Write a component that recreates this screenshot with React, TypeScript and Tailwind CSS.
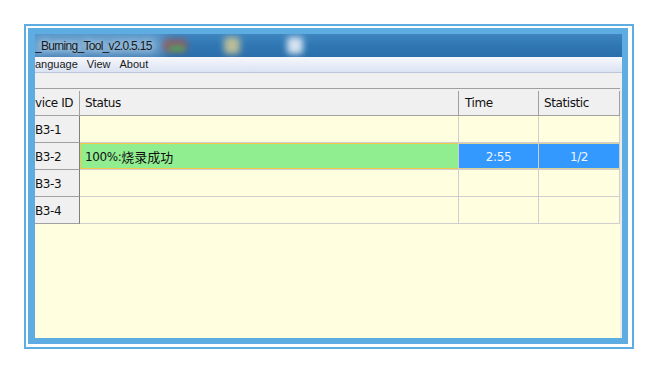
const sans = "font-['Liberation_Sans',Arial,'Noto_Sans_CJK_SC',sans-serif]";
const tahoma = "font-['DejaVu_Sans','Noto_Sans_CJK_SC',sans-serif]";

type Row = { id: string; status: string; time: string; stat: string; active?: boolean };

const rows: Row[] = [
  { id: "B3-1", status: "", time: "", stat: "" },
  { id: "B3-2", status: "100%:", time: "2:55", stat: "1/2", active: true },
  { id: "B3-3", status: "", time: "", stat: "" },
  { id: "B3-4", status: "", time: "", stat: "" },
];

function TitleBar() {
  return (
    <div className="relative h-[23px] shrink-0 overflow-hidden bg-gradient-to-b from-[#3f86c0] via-[#2f77b3] to-[#2a6fab]">
      <div className="absolute left-[-10px] top-[1px] h-[22px] w-[140px] rounded-full bg-[#a9cbe6] opacity-60 blur-[7px]" />
      <div className="absolute left-[128px] top-[5px] h-[13px] w-[24px] rounded-sm bg-[#a05a55] opacity-80 blur-[3px]" />
      <div className="absolute left-[134px] top-[11px] h-[7px] w-[16px] rounded-sm bg-[#4fa060] opacity-80 blur-[2px]" />
      <div className="absolute left-[189px] top-[3px] h-[17px] w-[16px] rounded-sm bg-[#c9c497] opacity-90 blur-[3px]" />
      <div className="absolute left-[252px] top-[3px] h-[17px] w-[16px] rounded-sm bg-[#e6eef8] opacity-90 blur-[3px]" />
      <div
        className={`relative pt-[5px] text-[12px] leading-[14px] tracking-[-0.7px] text-[#1a1a1a] [text-shadow:0_0_6px_#e6f0fa] ${sans}`}
      >
        _Burning_Tool_v2.0.5.15
      </div>
    </div>
  );
}

function MenuBar() {
  return (
    <div
      className={`flex h-[16px] shrink-0 items-center gap-[9px] border-b border-[#bcc5d9] bg-gradient-to-b from-[#f6f8fc] to-[#dbe2f2] text-[11px] text-[#1a1a1a] ${sans}`}
    >
      <span>anguage</span>
      <span>View</span>
      <span>About</span>
    </div>
  );
}

function Grid() {
  return (
    <div className={`flex w-[585px] flex-col bg-[#ffffe0] text-[12px] tracking-[-0.4px] text-[#111] ${tahoma}`}>
      <div className="flex h-[28px] border-y border-[#a0a0a0] bg-[#f0f0f0] pt-[2px]">
        <div className="flex w-[45px] items-center border-r border-[#a0a0a0]">vice ID</div>
        <div className="flex w-[379px] items-center border-r border-[#a0a0a0] pl-[5px]">Status</div>
        <div className="flex w-[80px] items-center border-r border-[#a0a0a0] pl-[6px]">Time</div>
        <div className="flex w-[81px] items-center border-r border-[#a0a0a0] pl-[5px]">Statistic</div>
      </div>
      {rows.map((r) => (
        <div key={r.id} className="flex h-[27px]">
          <div className="flex w-[45px] items-center border-r border-b border-r-[#808080] border-b-[#a0a0a0] bg-[#f0f0f0] pt-[1px]">
            {r.id}
          </div>
          <div
            className={`flex w-[379px] items-center border-r border-b border-[#cfcfcf] pl-[5px] pt-[1px] ${
              r.active ? "bg-[#90ee90] shadow-[inset_1px_1px_0_#efc94a,inset_0_-1px_0_#efc94a]" : ""
            }`}
          >
            {r.status}
            {r.active && (
              <span className="text-[13px] tracking-normal font-['Noto_Sans_CJK_SC',sans-serif]">烧录成功</span>
            )}
          </div>
          <div
            className={`flex w-[80px] items-center justify-center border-r border-b border-[#cfcfcf] pt-[1px] ${
              r.active ? "bg-[#3399ff] text-[#eef5ff] shadow-[inset_0_1px_0_#d9cf9a,inset_0_-1px_0_#d9cf9a]" : ""
            }`}
          >
            {r.time}
          </div>
          <div
            className={`flex w-[81px] items-center justify-center border-r border-b border-[#cfcfcf] pt-[1px] ${
              r.active ? "bg-[#3399ff] text-[#eef5ff] shadow-[inset_0_1px_0_#d9cf9a,inset_0_-1px_0_#d9cf9a]" : ""
            }`}
          >
            {r.stat}
          </div>
        </div>
      ))}
      <div className="flex-1" />
    </div>
  );
}

export default function App() {
  return (
    <div className="h-[374px] w-[658px] bg-white pl-[24px] pt-[24px]">
      <div className="h-[325px] w-[610px] border-2 border-[#5dade2] bg-white pb-[3px] pl-[2px] pr-[4px] pt-[2px]">
        <div className="flex h-full flex-col overflow-hidden border-b-[6px] border-l-[7px] border-r-[6px] border-t-[6px] border-[#5dade2] bg-[#f0f0f0]">
          <TitleBar />
          <MenuBar />
          <div className="h-[15px] shrink-0 bg-[#f0f0f0]" />
          <div className="flex flex-1">
            <Grid />
            <div className="flex-1 bg-[#ebebeb]" />
          </div>
        </div>
      </div>
    </div>
  );
}
